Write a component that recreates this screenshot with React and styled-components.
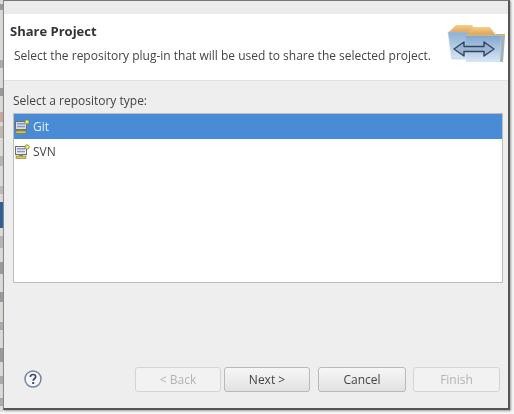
import React from 'react'
import styled, { createGlobalStyle } from 'styled-components'

const Global = createGlobalStyle`
  html, body {
    margin: 0;
    padding: 0;
    background: #f6f6f6;
  }
  body {
    font-family: "Open Sans", "DejaVu Sans", sans-serif;
  }
`

// bits of the window behind the dialog: gap above each one, height, colour
const behindMarks = [
  [4, 6, '#999'],
  [50, 8, '#aaa'],
  [20, 8, '#999'],
  [16, 10, '#c9a89f'],
  [4, 12, '#bdb9b2'],
  [18, 10, '#b5b5b5'],
  [20, 8, '#bbb'],
  [8, 26, '#2f5f95'],
  [8, 12, '#b5b5b5'],
  [14, 12, '#999'],
  [18, 10, '#999'],
  [20, 8, '#aaa'],
  [18, 14, '#999'],
  [14, 8, '#aaa'],
  [14, 8, '#aaa'],
]

function FolderIcon () {
  return (
    <FolderSvg width="60" height="40" viewBox="0 0 60 40">
      <defs>
        <linearGradient id="tab" x1="0" y1="0" x2="0" y2="1">
          <stop offset="0" stopColor="#f6cf90" />
          <stop offset="1" stopColor="#e6a650" />
        </linearGradient>
        <linearGradient id="back" x1="0" y1="0" x2="0" y2="1">
          <stop offset="0" stopColor="#8db0d4" />
          <stop offset="1" stopColor="#d3e5f3" />
        </linearGradient>
        <linearGradient id="front" x1="0" y1="0" x2="0" y2="1">
          <stop offset="0" stopColor="#83a8d0" />
          <stop offset="1" stopColor="#d6e8f5" />
        </linearGradient>
      </defs>
      <path d="M2 8 L9 1 H25 L30 8 Z" fill="url(#tab)" />
      <path d="M1 8 H34 V35 H5 Z" fill="url(#back)" stroke="#b7c9db" strokeWidth="0.6" />
      <path d="M20 10 L26 3 H43 L48 10 Z" fill="url(#tab)" />
      <path d="M19 10 H58 V12 H19 Z" fill="#c9b48a" />
      <path d="M19 12 H54 L53 38 H19 Z" fill="url(#front)" />
      <path d="M54 12 H58 L56 38 H53 Z" fill="#a4b2c0" />
      <path d="M7 25 L17 18 V22.5 H37 V18 L47 25 L37 32 V27.5 H17 V32 Z" fill="#9cb4d2" stroke="#2c4560" strokeWidth="1.4" strokeLinejoin="round" />
    </FolderSvg>
  )
}

function RepoIcon ({ selected }) {
  return (
    <svg width="15" height="15" viewBox="0 0 15 15">
      <rect x="0.5" y="2.5" width="11" height="8" fill={selected ? '#d8dfe0' : '#eceef4'} stroke="#6f7058" />
      <rect x="2" y="4" width="8" height="1.5" fill="#8e96c6" />
      <rect x="2" y="6.8" width="8" height="1.5" fill="#8e96c6" />
      <rect x="4" y="10.5" width="4" height="1.5" fill="#8b8a5a" />
      <rect x="1" y="12" width="10" height="2.4" fill="#dcc752" stroke="#7a7338" strokeWidth="0.6" />
      <circle cx="12" cy="3" r="2.2" fill="#efe676" stroke="#7d7a33" strokeWidth="0.8" />
    </svg>
  )
}

function HelpIcon () {
  return (
    <svg width="18" height="18" viewBox="0 0 18 18">
      <circle cx="9" cy="9" r="8" fill="#f6f7fa" stroke="#7484a3" strokeWidth="1.5" />
      <path d="M6.3 7 C6.3 5.2 7.6 4.5 9 4.5 C10.6 4.5 11.7 5.5 11.7 6.8 C11.7 8.7 9.2 8.8 9.2 10.8" fill="none" stroke="#3f4a5e" strokeWidth="1.7" />
      <rect x="8.2" y="12" width="2" height="2" fill="#3f4a5e" />
    </svg>
  )
}

export default function App () {
  return (
    <Screen>
      <Global />
      <Behind>
        {behindMarks.map(([gap, height, color], i) => (
          <BehindMark key={i} $gap={gap} $height={height} $color={color} />
        ))}
      </Behind>
      <Window>
        <TitleStrip />
        <Banner>
          <BannerText>
            <Title>Share Project</Title>
            <Description>Select the repository plug-in that will be used to share the selected project.</Description>
          </BannerText>
          <FolderIcon />
        </Banner>
        <Body>
          <Label>Select a repository type:</Label>
          <List>
            <Row $selected>
              <RepoIcon selected />
              <span>Git</span>
            </Row>
            <Row>
              <RepoIcon />
              <span>SVN</span>
            </Row>
          </List>
        </Body>
        <Footer>
          <Help><HelpIcon /></Help>
          <Buttons>
            <Button disabled>&lt; Back</Button>
            <Button>Next &gt;</Button>
            <Button $wide>Cancel</Button>
            <Button disabled $last>Finish</Button>
          </Buttons>
        </Footer>
      </Window>
    </Screen>
  )
}

const Screen = styled.div`
  display: flex;
  width: 514px;
  height: 414px;
  overflow: hidden;
  background: #f6f6f6;
  filter: blur(0.35px);
`

const Behind = styled.div`
  flex: 0 0 3px;
  height: 412px;
  display: flex;
  flex-direction: column;
  overflow: hidden;
  background: #dcdad6;
`

const BehindMark = styled.div`
  flex: none;
  margin-top: ${props => props.$gap}px;
  height: ${props => props.$height}px;
  background: ${props => props.$color};
`

const Window = styled.div`
  flex: 0 0 507px;
  height: 410px;
  display: flex;
  flex-direction: column;
  box-sizing: border-box;
  background: #eeeeee;
  border-left: 1px solid #8a8a8a;
  border-right: 2px solid #555;
  border-top: 1px solid #777;
  border-bottom: 2px solid #555;
  box-shadow: 1px 1px 2px #999;
`

const TitleStrip = styled.div`
  height: 13px;
  background: #ebebeb;
`

const Banner = styled.div`
  height: 67px;
  display: flex;
  justify-content: space-between;
  box-sizing: border-box;
  padding-right: 1px;
  background: #fff;
  border-bottom: 1px solid #e2e2e2;
`

const BannerText = styled.div`
  padding: 9px 0 0 6px;
`

const Title = styled.div`
  font-size: 13px;
  line-height: 16px;
  font-weight: 700;
  color: #333;
`

const Description = styled.div`
  margin: 9px 0 0 4px;
  font-size: 12px;
  line-height: 16px;
  color: #444;
  white-space: nowrap;
`

const FolderSvg = styled.svg`
  margin-top: 10px;
`

const Body = styled.div`
  flex: 1;
  display: flex;
  flex-direction: column;
  padding: 12px 5px 0 9px;
`

const Label = styled.div`
  font-size: 12px;
  line-height: 16px;
  color: #444;
  margin-bottom: 4px;
`

const List = styled.div`
  height: 170px;
  box-sizing: border-box;
  background: #fff;
  border: 1px solid #bdbdbd;
`

const Row = styled.div`
  height: 25px;
  display: flex;
  align-items: center;
  gap: 3px;
  padding-left: 1px;
  font-size: 12px;
  color: ${props => (props.$selected ? '#e6f0fb' : '#444')};
  background: ${props => (props.$selected ? '#4a8bd6' : 'transparent')};
`

const Footer = styled.div`
  display: flex;
  justify-content: space-between;
  align-items: center;
  padding: 0 8px 16px 20px;
`

const Help = styled.div`
  display: flex;
  margin-bottom: 2px;
`

const Buttons = styled.div`
  display: flex;
  gap: 3px;
`

const Button = styled.button`
  width: ${props => (props.$wide ? '88px' : props.$last ? '87px' : '86px')};
  height: 25px;
  margin-left: ${props => (props.$wide ? '5px' : props.$last ? '4px' : '0')};
  box-sizing: border-box;
  padding: 0;
  font-family: inherit;
  font-size: 12px;
  color: #444;
  background: linear-gradient(#f6f6f6, #e2e2e2);
  border: 1px solid #b9b9b9;
  border-radius: 3px;

  &:disabled {
    color: #b4b4b4;
    background: #f2f2f2;
    border-color: #d4d4d4;
  }
`
